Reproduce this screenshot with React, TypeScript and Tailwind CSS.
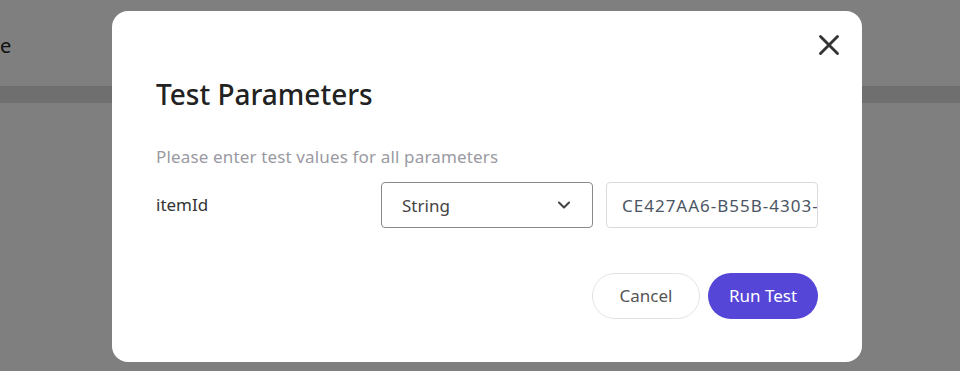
import { X, ChevronDown } from 'lucide-react';

const font = { fontFamily: '"Noto Sans", "Open Sans", sans-serif' };

const App = () => {
  return (
    <div className="relative w-[960px] h-[371px] overflow-hidden bg-white" style={font}>
      {/* page behind */}
      <div className="h-[86px] flex items-center text-[20px] text-[#222] pt-[6px]">
        e
      </div>
      <div className="h-[17px] bg-[#dedede]" />

      {/* overlay */}
      <div className="absolute inset-0 bg-black/50 flex items-start justify-center">
        <div className="relative mt-[11px] ml-[14px] w-[750px] h-[351px] bg-white rounded-[16px] px-[44px] pt-[64px]">
          <button className="absolute right-[16px] top-[17px] text-[#333]" aria-label="Close">
            <X size={34} strokeWidth={2} />
          </button>

          <h2 className="text-[28px] font-medium text-[#222] leading-[38px]">Test Parameters</h2>

          <p className="mt-[32px] text-[17px] tracking-[0.15px] text-[#9a9aa2] leading-[24px]">
            Please enter test values for all parameters
          </p>

          <div className="mt-[13px] flex items-center gap-[13px]">
            <span className="flex-1 text-[17px] text-[#333] -mt-[1px]">itemId</span>
            <div className="w-[212px] h-[46px] border border-[#8a8a8a] rounded-[4px] flex items-center justify-between pl-[20px] pr-[18px] pt-[2px] text-[17px] text-[#444]">
              <span>String</span>
              <ChevronDown size={20} strokeWidth={2.5} className="text-[#444] -mt-[2px]" />
            </div>
            <div className="w-[212px] h-[46px] border border-[#d9dbe0] rounded-[4px] flex items-center pl-[15px] pt-[2px] overflow-hidden whitespace-nowrap text-[17px] tracking-[1px] text-[#4b5563]">
              CE427AA6-B55B-4303-9F1E
            </div>
          </div>

          <div className="mt-[45px] flex justify-end gap-[8px]">
            <button className="w-[108px] h-[46px] rounded-full border border-[#e3e3e3] text-[17px] text-[#555]">
              Cancel
            </button>
            <button className="w-[110px] h-[46px] rounded-full bg-[#5546d8] text-[17px] text-white">
              Run Test
            </button>
          </div>
        </div>
      </div>
    </div>
  );
};

export default App;
